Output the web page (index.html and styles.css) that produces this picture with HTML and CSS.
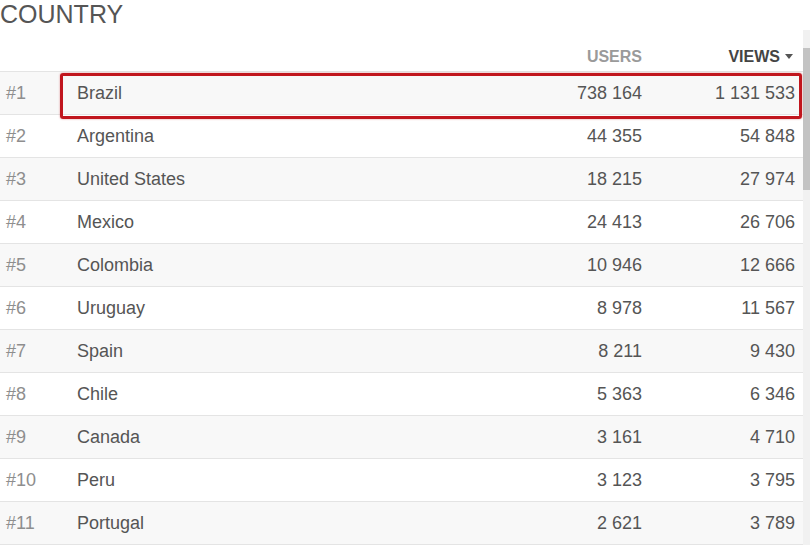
FILE: index.html
```html
<!DOCTYPE html>
<html>
<head>
<meta charset="utf-8">
<link rel="stylesheet" href="styles.css">
</head>
<body>
<h1 class="title">COUNTRY</h1>
<div class="wrap">
  <table class="grid">
    <colgroup>
      <col class="c-rank"><col class="c-name"><col class="c-users"><col class="c-views">
    </colgroup>
    <thead>
      <tr><th></th><th></th><th class="num th-users">USERS</th><th class="num th-views">VIEWS<span class="caret"></span></th></tr>
    </thead>
    <tbody>
      <tr class="hl"><td class="rank">#1</td><td class="name"><span class="box"></span>Brazil</td><td class="num">738 164</td><td class="num">1 131 533</td></tr>
      <tr><td class="rank">#2</td><td class="name">Argentina</td><td class="num">44 355</td><td class="num">54 848</td></tr>
      <tr><td class="rank">#3</td><td class="name">United States</td><td class="num">18 215</td><td class="num">27 974</td></tr>
      <tr><td class="rank">#4</td><td class="name">Mexico</td><td class="num">24 413</td><td class="num">26 706</td></tr>
      <tr><td class="rank">#5</td><td class="name">Colombia</td><td class="num">10 946</td><td class="num">12 666</td></tr>
      <tr><td class="rank">#6</td><td class="name">Uruguay</td><td class="num">8 978</td><td class="num">11 567</td></tr>
      <tr><td class="rank">#7</td><td class="name">Spain</td><td class="num">8 211</td><td class="num">9 430</td></tr>
      <tr><td class="rank">#8</td><td class="name">Chile</td><td class="num">5 363</td><td class="num">6 346</td></tr>
      <tr><td class="rank">#9</td><td class="name">Canada</td><td class="num">3 161</td><td class="num">4 710</td></tr>
      <tr><td class="rank">#10</td><td class="name">Peru</td><td class="num">3 123</td><td class="num">3 795</td></tr>
      <tr><td class="rank">#11</td><td class="name">Portugal</td><td class="num">2 621</td><td class="num">3 789</td></tr>
    </tbody>
  </table>
  <div class="scroll"><div class="thumb"></div></div>
</div>
</body>
</html>
```
FILE: styles.css
```css
html, body {
  margin: 0;
  padding: 0;
  background: #fff;
  font-family: "Liberation Sans", Arial, sans-serif;
  overflow: hidden;
}
.title {
  margin: 0;
  font-size: 25px;
  line-height: 28px;
  font-weight: normal;
  color: #555;
}
.wrap {
  display: flex;
  align-items: flex-start;
}
.grid {
  width: 803px;
  table-layout: fixed;
  border-collapse: collapse;
  flex: none;
}
.c-rank { width: 71px; }
.c-users { width: 150px; }
.c-views { width: 161px; }
.grid th {
  height: 43px;
  padding: 0 0 6px 0;
  vertical-align: bottom;
  font-size: 16px;
  line-height: 16px;
  font-weight: bold;
  border-bottom: 1px solid #e4e4e4;
  box-sizing: border-box;
}
.th-users { color: #9a9a9a; }
.th-views { color: #444; }
.grid th.th-views { padding-right: 10px; }
.caret {
  display: inline-block;
  width: 0;
  height: 0;
  margin-left: 5px;
  border-left: 4px solid transparent;
  border-right: 4px solid transparent;
  border-top: 5px solid #555;
  vertical-align: 3px;
}
.grid td {
  height: 43px;
  box-sizing: border-box;
  padding: 0;
  font-size: 18px;
  line-height: 20px;
  color: #555;
  border-bottom: 1px solid #e4e4e4;
  vertical-align: middle;
  white-space: nowrap;
}
.grid tbody tr:nth-child(odd) td { background: #f8f8f8; }
.grid td.rank { padding-left: 6px; color: #8e8e8e; }
.grid td.name { padding-left: 6px; position: relative; }
.num { text-align: right; }
.grid td.num:last-child { padding-right: 8px; }
.box {
  position: absolute;
  left: -11px;
  top: 1px;
  width: 742px;
  height: 46px;
  box-sizing: border-box;
  border: 3px solid #c1161e;
  border-radius: 3px;
  box-shadow: 0 0 2px rgba(193, 22, 30, 0.5);
  z-index: 2;
  pointer-events: none;
}
.scroll {
  width: 7px;
  height: 520px;
  margin-top: 2px;
  background: #f1f1f1;
  flex: none;
}
.thumb {
  margin-top: 18px;
  height: 142px;
  background: #c3c3c3;
}
```
